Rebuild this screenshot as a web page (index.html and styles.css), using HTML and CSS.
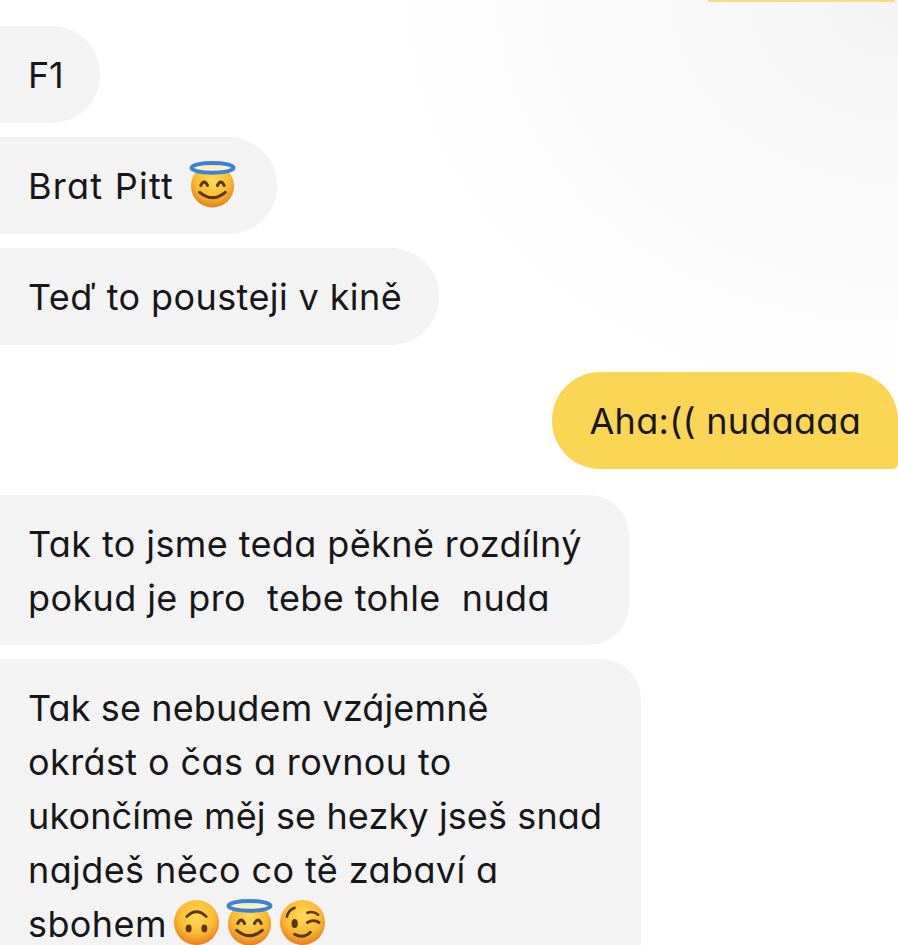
FILE: index.html
```html
<!DOCTYPE html>
<html lang="cs">
<head>
<meta charset="utf-8">
<title>Chat</title>
<link rel="stylesheet" href="styles.css">
</head>
<body>
<svg class="defs" width="0" height="0" aria-hidden="true">
  <defs>
    <radialGradient id="face" cx="50%" cy="36%" r="64%">
      <stop offset="0" stop-color="#ffdc58"/>
      <stop offset=".62" stop-color="#fabb30"/>
      <stop offset="1" stop-color="#e67e1e"/>
    </radialGradient>
    <symbol id="angel" viewBox="0 0 48 48">
      <circle cx="24" cy="25.5" r="22" fill="url(#face)"/>
      <ellipse cx="24" cy="7" rx="21.5" ry="5" fill="#fbf3d2" fill-opacity=".9" stroke="#3b82d6" stroke-width="4"/>
      <path d="M12 25q3.500-7 7 0M29 25q3.500-7 7 0" fill="none" stroke="#5b3414" stroke-width="3" stroke-linecap="round"/>
      <path d="M11 32q13 11 26 0" fill="none" stroke="#5b3414" stroke-width="3.200" stroke-linecap="round"/>
    </symbol>
    <symbol id="upside" viewBox="0 0 48 48">
      <circle cx="24" cy="24" r="23" fill="url(#face)"/>
      <path d="M14 18q10-10 20 0" fill="none" stroke="#5b3414" stroke-width="2.800" stroke-linecap="round"/>
      <ellipse cx="16" cy="30" rx="3" ry="4" fill="#5b3414"/>
      <ellipse cx="32" cy="30" rx="3" ry="4" fill="#5b3414"/>
    </symbol>
    <symbol id="wink" viewBox="0 0 48 48">
      <circle cx="24" cy="24" r="23" fill="url(#face)"/>
      <path d="M8 18q2-7 8-9M29 14q6-2 11 2" fill="none" stroke="#5b3414" stroke-width="2.600" stroke-linecap="round"/>
      <ellipse cx="16" cy="25" rx="3.200" ry="4.600" fill="#5b3414"/>
      <path d="M29 24q6-4 12 0" fill="none" stroke="#5b3414" stroke-width="2.800" stroke-linecap="round"/>
      <path d="M16 36q9 5 16-2" fill="none" stroke="#5b3414" stroke-width="3" stroke-linecap="round"/>
    </symbol>
  </defs>
</svg>
<main class="chat">
  <div class="sliver"></div>
  <div class="msg in short track-tight">F1</div>
  <div class="msg in short with-emoji"><span class="track-wide">Brat Pitt</span><svg class="emoji gap-first"><use href="#angel"/></svg></div>
  <div class="msg in short track-mid">Teď to pousteji v kině</div>
  <div class="msg out short">Aha:(( nudaaaa</div>
  <div class="msg in wide-a track-mid">Tak to jsme teda pěkně rozdílný<br>pokud je pro&nbsp; tebe tohle&nbsp; nuda</div>
  <div class="msg in wide-b">Tak se nebudem vzájemně<br><span class="track-mid">okrást o čas a rovnou to</span><br>ukončíme měj se hezky jseš snad<br><span class="track-mid">najdeš něco co tě zabaví a</span><br><span class="track-mid">sbohem</span><svg class="emoji gap-small"><use href="#upside"/></svg><svg class="emoji gap-small"><use href="#angel"/></svg><svg class="emoji gap-small"><use href="#wink"/></svg></div>
</main>
</body>
</html>
```

FILE: styles.css
```css
html, body {
  margin: 0;
  padding: 0;
  height: 945px;
  overflow: hidden;
}
body {
  background: radial-gradient(ellipse 520px 420px at 100% 0, #f4f4f4 0, #fafafa 50%, #ffffff 100%) #ffffff;
  font-family: "Inter", "Noto Sans", sans-serif;
  font-feature-settings: "cv11" 1;
  color: #171718;
}
.defs { position: absolute; }
.chat {
  display: flex;
  flex-direction: column;
  align-items: flex-start;
}
.sliver {
  width: 187px;
  height: 2px;
  margin: 0 0 24px 708px;
  background: #f9dc80;
}
.msg {
  box-sizing: border-box;
  font-size: 36px;
  letter-spacing: 0.12px;
  line-height: 54px;
  padding: 22px 37px 21px 28px;
  margin-bottom: 14px;
  background: #f3f3f4;
  white-space: nowrap;
}
.track-tight { letter-spacing: -0.3px; }
.track-mid { letter-spacing: 0.4px; }
.track-wide { letter-spacing: 1.25px; }
.msg.in { border-radius: 0 48px 48px 0; }
.msg.short { height: 97px; }
.msg.with-emoji { padding-right: 41px; }
.msg.out {
  align-self: flex-end;
  background: #fbd655;
  margin: 13px 0 26px;
  padding-left: 38px;
  letter-spacing: 0.27px;
  border-radius: 48px 48px 5px 48px;
}
.msg.wide-a { width: 629px; height: 150px; border-radius: 0 40px 40px 0; }
.msg.wide-b {
  width: 641px;
  height: 286px;
  margin-bottom: 0;
  padding-bottom: 0;
  border-radius: 0 40px 0 0;
}
.emoji {
  width: 47px;
  height: 47px;
  margin-top: -8px;
  vertical-align: -9px;
}
.gap-first { margin-left: 15px; }
.gap-small { margin-left: 6px; }
```
